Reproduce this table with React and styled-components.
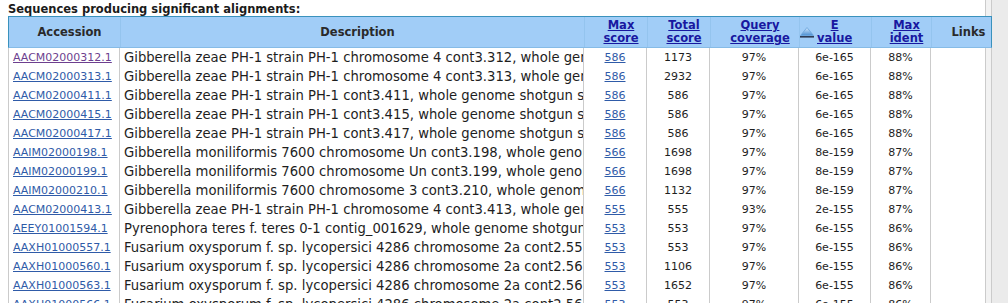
import React from 'react'
import styled, { createGlobalStyle } from 'styled-components'

const GlobalStyle = createGlobalStyle`
  html, body {
    margin: 0;
    height: 303px;
    overflow: hidden;
  }
  body {
    font-family: Verdana, "DejaVu Sans", sans-serif;
    color: #222;
    background: linear-gradient(
      to right,
      #fff 0 985px,
      #cbcbcb 985px 986px,
      #f2f2f2 986px 991px,
      #cbcbcb 991px 992px,
      #ebebeb 992px
    );
  }
`

const COLUMNS = '111px 464px 63px 63px 89px 72px 60px 62px'

const rows = [
  ['AACM02000312.1', 'Gibberella zeae PH-1 strain PH-1 chromosome 4 cont3.312, whole genome shotgun sequence', '586', '1173', '97%', '6e-165', '88%', true],
  ['AACM02000313.1', 'Gibberella zeae PH-1 strain PH-1 chromosome 4 cont3.313, whole genome shotgun sequence', '586', '2932', '97%', '6e-165', '88%'],
  ['AACM02000411.1', 'Gibberella zeae PH-1 strain PH-1 cont3.411, whole genome shotgun sequence', '586', '586', '97%', '6e-165', '88%'],
  ['AACM02000415.1', 'Gibberella zeae PH-1 strain PH-1 cont3.415, whole genome shotgun sequence', '586', '586', '97%', '6e-165', '88%'],
  ['AACM02000417.1', 'Gibberella zeae PH-1 strain PH-1 cont3.417, whole genome shotgun sequence', '586', '586', '97%', '6e-165', '88%'],
  ['AAIM02000198.1', 'Gibberella moniliformis 7600 chromosome Un cont3.198, whole genome shotgun sequence', '566', '1698', '97%', '8e-159', '87%'],
  ['AAIM02000199.1', 'Gibberella moniliformis 7600 chromosome Un cont3.199, whole genome shotgun sequence', '566', '1698', '97%', '8e-159', '87%'],
  ['AAIM02000210.1', 'Gibberella moniliformis 7600 chromosome 3 cont3.210, whole genome shotgun sequence', '566', '1132', '97%', '8e-159', '87%'],
  ['AACM02000413.1', 'Gibberella zeae PH-1 strain PH-1 chromosome 4 cont3.413, whole genome shotgun sequence', '555', '555', '93%', '2e-155', '87%'],
  ['AEEY01001594.1', 'Pyrenophora teres f. teres 0-1 contig_001629, whole genome shotgun sequence', '553', '553', '97%', '6e-155', '86%'],
  ['AAXH01000557.1', 'Fusarium oxysporum f. sp. lycopersici 4286 chromosome 2a cont2.55, whole genome shotgun sequence', '553', '553', '97%', '6e-155', '86%'],
  ['AAXH01000560.1', 'Fusarium oxysporum f. sp. lycopersici 4286 chromosome 2a cont2.56, whole genome shotgun sequence', '553', '1106', '97%', '6e-155', '86%'],
  ['AAXH01000563.1', 'Fusarium oxysporum f. sp. lycopersici 4286 chromosome 2a cont2.56, whole genome shotgun sequence', '553', '1652', '97%', '6e-155', '86%'],
  ['AAXH01000566.1', 'Fusarium oxysporum f. sp. lycopersici 4286 chromosome 2a cont2.56, whole genome shotgun sequence', '553', '553', '97%', '6e-155', '86%']
]

const SortArrow = () => (
  <svg width="14" height="11" viewBox="0 0 14 11">
    <defs>
      <linearGradient id="arrowFill" x1="0" y1="0" x2="0" y2="1">
        <stop offset="0" stopColor="#d6ebff" />
        <stop offset="1" stopColor="#4b8fd2" />
      </linearGradient>
    </defs>
    <polygon points="7,0.5 13.5,8.5 0.5,8.5" fill="url(#arrowFill)" stroke="#6aa3da" strokeWidth="0.8" />
    <rect x="0" y="9" width="14" height="1.6" fill="#2e3c55" />
  </svg>
)

const App = () => {
  return (
    <Panel>
      <GlobalStyle />
      <Title>Sequences producing significant alignments:</Title>
      <Table>
        <HeaderRow>
          <HeadCell>Accession</HeadCell>
          <HeadCell>Description</HeadCell>
          <HeadCell><SortLink href="#">Max<br />score</SortLink></HeadCell>
          <HeadCell><SortLink href="#">Total<br />score</SortLink></HeadCell>
          <HeadCell><SortLink href="#">Query<br />coverage</SortLink></HeadCell>
          <HeadCell $sorted>
            <SortArrow />
            <SortLink href="#">E<br />value</SortLink>
          </HeadCell>
          <HeadCell><SortLink href="#">Max<br />ident</SortLink></HeadCell>
          <HeadCell $last>Links</HeadCell>
        </HeaderRow>
        {rows.map(([acc, desc, max, total, cover, evalue, ident, visited]) => (
          <Row key={acc}>
            <Cell $first>
              <AccLink href="#" $visited={visited}>{acc}</AccLink>
            </Cell>
            <DescCell>{desc}</DescCell>
            <NumCell><ScoreLink href="#">{max}</ScoreLink></NumCell>
            <NumCell>{total}</NumCell>
            <NumCell>{cover}</NumCell>
            <NumCell>{evalue}</NumCell>
            <NumCell>{ident}</NumCell>
            <Cell $last />
          </Row>
        ))}
      </Table>
    </Panel>
  )
}

const Panel = styled.div`
  padding: 2px 0 0 8px;
`

const Title = styled.div`
  font-size: 11.5px;
  font-weight: bold;
  line-height: 14px;
  color: #1b1b1b;
`

const Table = styled.div`
  width: 984px;
`

const HeaderRow = styled.div`
  display: grid;
  grid-template-columns: ${COLUMNS};
  height: 32px;
  box-sizing: border-box;
  background: #a1cdf7;
  border-top: 1px solid #3a92bd;
  border-bottom: 1px solid #86bbe6;
  border-left: 1px solid #3a92bd;
  border-right: 1px solid #3a92bd;
`

const HeadCell = styled.div`
  display: flex;
  align-items: center;
  justify-content: ${p => (p.$sorted ? 'flex-start' : 'center')};
  gap: 3px;
  padding-left: ${p => (p.$sorted ? '0' : '10px')};
  border-left: 1px solid #94c4ee;
  &:first-child {
    border-left: none;
  }
  font-size: 11.5px;
  font-weight: bold;
  line-height: 13px;
  text-align: center;
  color: #2a2a2a;
  ${p => p.$last && 'padding-left: 12px;'}
`

const SortLink = styled.a`
  color: #1818a0;
  text-decoration: underline;
  text-align: center;
`

const Row = styled.div`
  display: grid;
  grid-template-columns: ${COLUMNS};
  height: 19px;
`

const Cell = styled.div`
  box-sizing: border-box;
  border-left: 1px solid #cbcbcb;
  ${p => p.$last && 'border-right: 1px solid #cbcbcb;'}
  display: flex;
  align-items: center;
  padding-left: ${p => (p.$first ? '4px' : '0')};
`

const DescCell = styled(Cell)`
  display: block;
  padding: 0 3px 0 4px;
  font-size: 13.2px;
  line-height: 19px;
  white-space: nowrap;
  overflow: hidden;
  color: #1e1e1e;
`

const NumCell = styled(Cell)`
  justify-content: center;
  font-size: 11px;
  color: #1e1e1e;
`

const AccLink = styled.a`
  font-size: 11px;
  color: ${p => (p.$visited ? '#6d3f8f' : '#2f5ba8')};
  text-decoration: underline;
`

const ScoreLink = styled.a`
  font-size: 11px;
  color: #2f5ba8;
  text-decoration: underline;
`

export default App
